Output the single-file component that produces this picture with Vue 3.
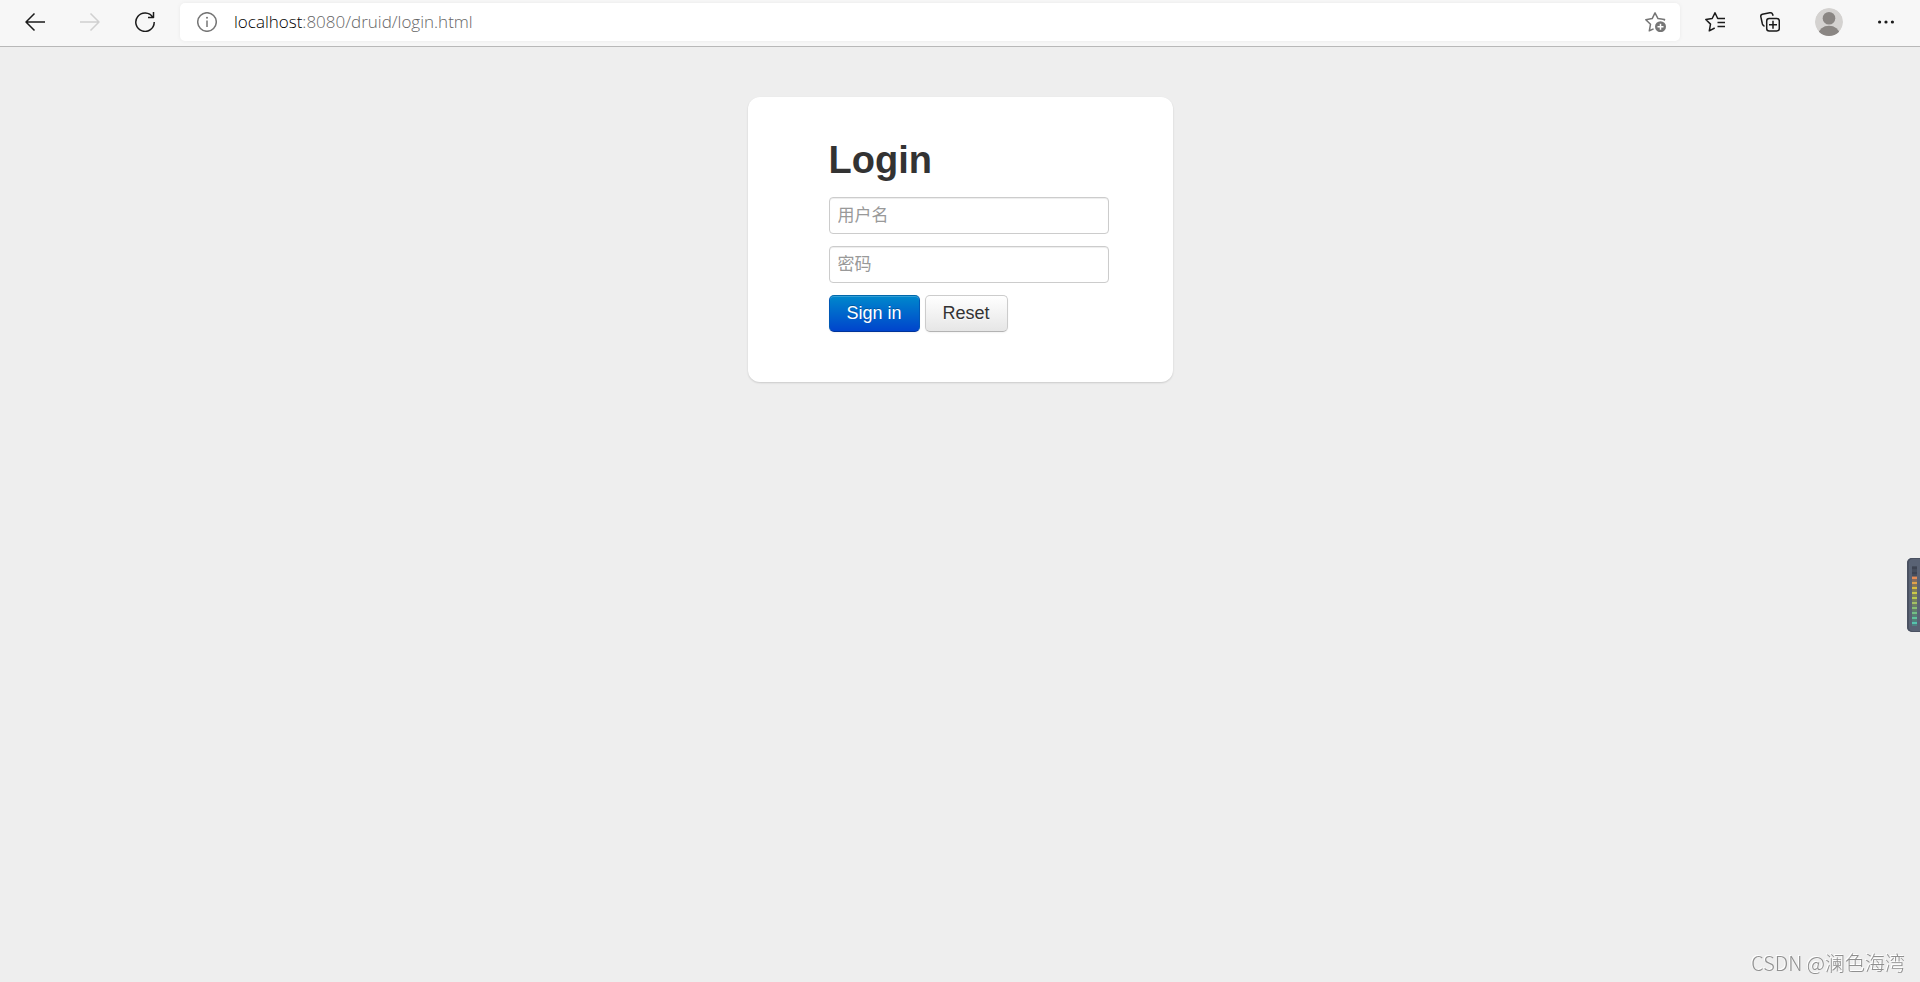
<template>
  <div class="browser">
    <header class="toolbar">
      <nav class="tools" aria-label="Navigation">
        <button type="button" class="tool" aria-label="Back">
          <svg width="20" height="20" viewBox="0 0 20 20">
            <path d="M9.500 1.500L1 10l8.500 8.500M1 10h19" />
          </svg>
        </button>
        <button type="button" class="tool disabled" aria-label="Forward" disabled>
          <svg width="20" height="20" viewBox="0 0 20 20">
            <path d="M10.500 1.500L19 10l-8.500 8.500M19 10H0" />
          </svg>
        </button>
        <button type="button" class="tool" aria-label="Refresh" @click="reset">
          <svg width="20" height="20" viewBox="0 0 20 20">
            <path d="M17.800 5.300A9.200 9.200 0 1 0 19.200 10M18.500 0v5.500h-5.500" />
          </svg>
        </button>
      </nav>

      <div class="address">
        <button type="button" class="tool grey" aria-label="Site information">
          <svg width="20" height="20" viewBox="0 0 20 20">
            <circle cx="10" cy="10" r="9.300" />
            <path d="M10 8.500v6.500" />
            <circle class="solid" cx="10" cy="5.700" r="1" />
          </svg>
        </button>
        <a class="url" href="#"><span class="host">localhost</span>:8080/druid/login.html</a>
        <button type="button" class="tool grey" aria-label="Add to favorites">
          <svg width="21" height="20" viewBox="0 0 21 20">
            <path d="M18.800 8.700l.7-1.200-6.500-.9L10 .8 7.200 6.600.8 7.700l4.700 4.600L4.300 18.800l4.300-1.900" />
            <circle class="solid" cx="15.500" cy="14.700" r="5.500" />
            <path class="plus" d="M15.500 11.700v6M12.500 14.700h6" />
          </svg>
        </button>
      </div>

      <div class="tools">
        <button type="button" class="tool" aria-label="Favorites">
          <svg width="20" height="20" viewBox="0 0 20 20">
            <path d="M15 6.500h-2.300L10 .8 7.200 6.500.8 7.500l4.700 4.600L4.300 18.800l5.400-2.800M12.500 6.500H20M12.500 10.500H20M12.500 14.500H20" />
          </svg>
        </button>
        <button type="button" class="tool" aria-label="Collections">
          <svg width="20" height="20" viewBox="0 0 20 20">
            <path d="M4.500 14.300C3.300 13.700 2.700 13 2.400 12L.9 5.100C.5 3.700 1 2.700 2.300 2.300L9.800.8c1.500-.3 2.500.3 2.900 1.700l.4 1.300" />
            <rect x="6.700" y="6.500" width="12.600" height="12.600" rx="2.500" />
            <path d="M13 8.800v8M9 12.800h8" />
          </svg>
        </button>
        <button type="button" class="tool" aria-label="Profile">
          <svg width="28" height="28" viewBox="0 0 28 28">
            <clipPath id="avatar"><circle cx="14" cy="14" r="14" /></clipPath>
            <g class="avatar" clip-path="url(#avatar)">
              <circle class="avatar-bg" cx="14" cy="14" r="14" />
              <circle cx="14" cy="10.200" r="6.300" />
              <ellipse cx="14" cy="26" rx="10.500" ry="8.200" />
            </g>
          </svg>
        </button>
        <button type="button" class="tool" aria-label="Settings and more">
          <svg width="16" height="20" viewBox="0 0 16 20">
            <g class="dots">
              <circle cx="1.600" cy="10" r="1.600" />
              <circle cx="8" cy="10" r="1.600" />
              <circle cx="14.400" cy="10" r="1.600" />
            </g>
          </svg>
        </button>
      </div>
    </header>

    <main class="page">
      <form class="login" @submit.prevent @reset="reset">
        <h2>Login</h2>
        <input v-model="username" type="text" placeholder="用户名" aria-label="用户名" />
        <input v-model="password" type="password" placeholder="密码" aria-label="密码" />
        <div class="actions">
          <button type="submit" class="btn primary">Sign in</button>
          <button type="reset" class="btn">Reset</button>
        </div>
      </form>
    </main>

    <div class="meter" aria-hidden="true">
      <i v-for="(color, i) in levels" :key="i" :style="{ backgroundColor: color }"></i>
    </div>
    <div class="watermark">CSDN @澜色海湾</div>
  </div>
</template>

<script setup>
import { ref } from "vue";

const username = ref("");
const password = ref("");

const levels = [
  "#3d4352",
  "#3d4352",
  "#e58b55",
  "#dfa24c",
  "#d9bd3f",
  "#cbc94a",
  "#b9c94f",
  "#a3c065",
  "#88bd74",
  "#72bf86",
  "#5fc29b",
  "#55c4ae",
];

function reset() {
  username.value = "";
  password.value = "";
}
</script>

<style>
body {
  margin: 0;
  background: #eee;
}
</style>

<style scoped>
.browser {
  display: flex;
  flex-direction: column;
  min-height: 100vh;
  font-family: "Liberation Sans", "Noto Sans CJK SC", sans-serif;
  color: #333;
}

.toolbar {
  display: flex;
  align-items: center;
  gap: 25px;
  box-sizing: border-box;
  height: 47px;
  padding: 0 26px 3px 25px;
  background: #f7f7f7;
  border-bottom: 1px solid #b8b8b8;
}

.tools {
  display: flex;
  align-items: center;
  gap: 35px;
}

.tool {
  display: flex;
  padding: 0;
  border: 0;
  background: none;
  color: #1b1b1b;
}

.tool.disabled {
  color: #d0d0d0;
}

.tool.grey {
  color: #767676;
}

.tool svg {
  fill: none;
  stroke: currentColor;
  stroke-width: 1.5;
  stroke-linejoin: round;
}

.tool .solid,
.tool .dots {
  fill: currentColor;
  stroke: none;
}

.tool .plus {
  stroke: #fff;
}

.tool .avatar {
  fill: #8a8683;
  stroke: none;
}

.tool .avatar-bg {
  fill: #d4d2d0;
}

.address {
  display: flex;
  flex: 1;
  align-items: center;
  gap: 17px;
  box-sizing: border-box;
  height: 38px;
  padding: 0 14px 0 17px;
  border-radius: 5px;
  background: #fff;
  box-shadow: 0 0 4px rgba(0, 0, 0, 0.06);
}

.url {
  flex: 1;
  font-family: "Open Sans", "Noto Sans", sans-serif;
  font-size: 17px;
  font-weight: 300;
  line-height: 24px;
  color: #666;
  text-decoration: none;
}

.host {
  color: #000;
}

.page {
  flex: 1;
  padding: 50px 20px 20px;
}

.login {
  display: flex;
  flex-direction: column;
  align-items: flex-start;
  box-sizing: border-box;
  width: 425px;
  max-width: 100%;
  margin: 0 auto;
  padding: 38px 62px 50px 81px;
  border-radius: 12px;
  background: #fff;
  box-shadow: 0 1px 2px rgba(0, 0, 0, 0.15);
}

h2 {
  margin: 0 0 12px;
  font-size: 38px;
  line-height: 50px;
  font-weight: bold;
}

input {
  box-sizing: border-box;
  width: 280px;
  max-width: 100%;
  height: 37px;
  margin: 0 0 12px;
  padding: 0 8px;
  border: 1px solid #ccc;
  border-radius: 4px;
  background: #fff;
  box-shadow: inset 0 1px 1px rgba(0, 0, 0, 0.075);
  font-family: inherit;
  font-size: 17px;
  color: #555;
}

input::placeholder {
  color: #999;
}

.actions {
  display: flex;
  gap: 5px;
}

.btn {
  box-sizing: border-box;
  height: 37px;
  padding: 0 17px;
  border: 1px solid #ccc;
  border-bottom-color: #b3b3b3;
  border-radius: 5px;
  background: linear-gradient(#fff, #e6e6e6);
  box-shadow: inset 0 1px 0 rgba(255, 255, 255, 0.2), 0 1px 2px rgba(0, 0, 0, 0.05);
  font-family: inherit;
  font-size: 18px;
  line-height: 25px;
  color: #333;
  text-shadow: 0 1px 1px rgba(255, 255, 255, 0.75);
  cursor: pointer;
}

.btn.primary {
  border-color: #0068ab #0058b5 #003399;
  background: linear-gradient(#08c, #04c);
  color: #fff;
  text-shadow: 0 -1px 0 rgba(0, 0, 0, 0.25);
}

/* level meter docked to the window edge */
.meter {
  position: fixed;
  top: 558px;
  right: 0;
  display: flex;
  flex-direction: column;
  box-sizing: border-box;
  width: 13px;
  padding: 8px 3px 6px 5px;
  border-radius: 5px 0 0 5px;
  background: #596274;
  box-shadow: inset 1px 0 0 1px #4a5161;
}

.meter i {
  height: 5px;
  background-image: linear-gradient(rgba(75, 84, 99, 0.6) 1px, transparent 1px 3px, rgba(75, 84, 99, 0.6) 3px);
}

.watermark {
  position: fixed;
  right: 15px;
  bottom: 5px;
  font-family: "Noto Sans CJK SC", sans-serif;
  font-size: 20px;
  font-weight: 300;
  line-height: 28px;
  color: #909090;
  text-shadow: -1px -1px 0 #fff;
}
</style>
